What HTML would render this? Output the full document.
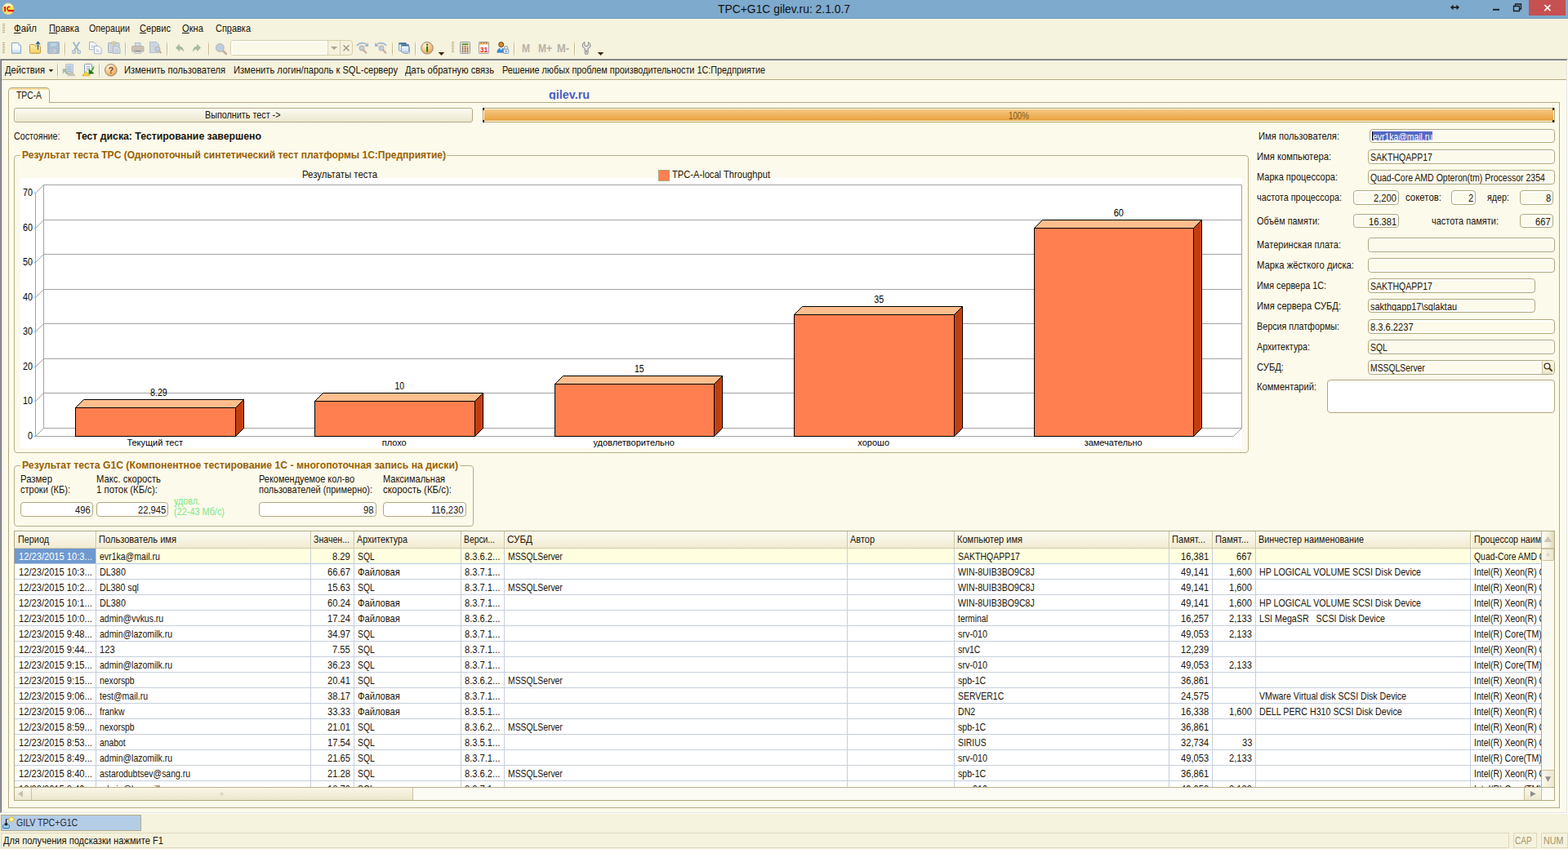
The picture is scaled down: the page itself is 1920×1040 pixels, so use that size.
<!DOCTYPE html>
<html lang="ru"><head><meta charset="utf-8"><title>TPC+G1C gilev.ru: 2.1.0.7</title>
<style>
html,body{margin:0;padding:0}
body{width:1920px;height:1040px;position:relative;overflow:hidden;background:#f5f2dd;font-family:"Liberation Sans",sans-serif;font-size:13px;color:#000}
div,span.t,svg{position:absolute;box-sizing:border-box}
span.t{white-space:pre;line-height:16px;font-size:13px;transform-origin:0 50%;color:#1c1408}
span.b{font-weight:bold}
span.g{color:#9a5f00;font-weight:bold}
span.w{color:#fff}
span.ch{font-size:12px}
.inp{border:1px solid #b0a87e;border-radius:4px;background:#fcfaeb;box-shadow:inset 0 0 0 2px #fff}
.btn{border:1px solid #b2aa80;border-radius:3px;background:linear-gradient(#fff 0,#fff 1px,#f9f7ea 3px,#f3f0de 55%,#ebe7d0 100%);box-shadow:inset 1px 0 0 #fff}
.grp{border:1px solid #b7af88;border-radius:4px}
.sep{width:2px;height:20px;background:linear-gradient(transparent,#c4b88c 25%,#c4b88c 75%,transparent) 0 0/1px 100% no-repeat,linear-gradient(transparent,#fffef8 25%,#fffef8 75%,transparent) 1px 0/1px 100% no-repeat}
.hd{background:linear-gradient(#fffffa 0,#fbfaf0 1px,#f6f3e2 50%,#f1ebd0 100%);border-bottom:1px solid #cfc8ac}
.vl{width:1px;background:#c6cfdb}
.hl{height:1px;background:#c6cfdb}

</style></head>
<body>
<div style="left:0px;top:0px;width:1920px;height:23px;background:#7eaace;border-bottom:1px solid #6f9bc0"></div>
<span class="t" style="left:879.00px;top:2.00px;transform:scaleX(0.9246);font-size:15px;line-height:18px;color:#111">TPC+G1C gilev.ru: 2.1.0.7</span>
<div style="left:1872px;top:0px;width:45px;height:19px;background:#c75050"></div>
<svg style="left:1872px;top:0" width="45" height="19"><path d="M19.300 6l7.200 7.200M26.500 6l-7.200 7.200" stroke="#fff" stroke-width="1.700" fill="none"/></svg>
<svg style="left:1770px;top:0" width="100" height="22" fill="none" stroke="#1b1b1b"><path d="M7.500 9h8" stroke-width="1.600"/><path d="M9.500 5.800L6 9l3.500 3.200zM13.500 5.800L17 9l-3.500 3.200z" fill="#1b1b1b" stroke="none"/><path d="M58 11.800h8" stroke-width="1.900"/><path d="M83.5 7.5h7v6h-7z" stroke-width="1.3"/><path d="M85.5 7.5v-2.5h7v6h-2" stroke-width="1.3"/></svg>
<svg style="left:0;top:0" width="22" height="22"><defs><linearGradient id="ig" x1="0" y1="0" x2="0" y2="1"><stop offset="0" stop-color="#fffdf0"/><stop offset=".22" stop-color="#fff6b8"/><stop offset=".5" stop-color="#f7de3e"/><stop offset=".72" stop-color="#f3d860"/><stop offset="1" stop-color="#fde6b4"/></linearGradient></defs><circle cx="10" cy="10.900" r="7.100" fill="url(#ig)" stroke="#d9b64a" stroke-width=".5"/><path d="M4.300 9.300l1.700-1.300h1v6.200h-1.700v-4.500z" fill="#e80c0c"/><circle cx="11" cy="10.600" r="2.100" fill="none" stroke="#e8200c" stroke-width="1.500" stroke-dasharray="9 4.200" transform="rotate(40 11 10.600)"/><rect x="9.800" y="12.200" width="7.300" height="2" fill="#e80000"/></svg>
<div style="left:0px;top:23px;width:1920px;height:50px;background:#f5f2dd"></div>
<div style="left:3px;top:29px;width:3px;height:12px;background:repeating-linear-gradient(#b9b08a 0 1px,transparent 1px 2px)"></div>
<span class="t" style="left:17.00px;top:27.00px;transform:scaleX(0.8759);"><u>Ф</u>айл</span>
<span class="t" style="left:60.00px;top:27.00px;transform:scaleX(0.8424);"><u>П</u>равка</span>
<span class="t" style="left:109.00px;top:27.00px;transform:scaleX(0.8222);">Операции</span>
<span class="t" style="left:171.00px;top:27.00px;transform:scaleX(0.8533);"><u>С</u>ервис</span>
<span class="t" style="left:223.00px;top:27.00px;transform:scaleX(0.8599);"><u>О</u>кна</span>
<span class="t" style="left:264.00px;top:27.00px;transform:scaleX(0.8429);">Сп<u>р</u>авка</span>
<div style="left:3px;top:52px;width:3px;height:13px;background:repeating-linear-gradient(#b9b08a 0 1px,transparent 1px 2px)"></div>
<div class="sep" style="left:79px;top:50px;width:2px;height:20px;"></div>
<div class="sep" style="left:153px;top:50px;width:2px;height:20px;"></div>
<div class="sep" style="left:204px;top:50px;width:2px;height:20px;"></div>
<div class="sep" style="left:255px;top:50px;width:2px;height:20px;"></div>
<div class="sep" style="left:480px;top:50px;width:2px;height:20px;"></div>
<div class="sep" style="left:508px;top:50px;width:2px;height:20px;"></div>
<div class="sep" style="left:629px;top:50px;width:2px;height:20px;"></div>
<div class="sep" style="left:703px;top:50px;width:2px;height:20px;"></div>
<div style="left:553px;top:51px;width:3px;height:13px;background:repeating-linear-gradient(#b9b08a 0 1px,transparent 1px 2px)"></div>
<div style="left:282px;top:49px;width:150px;height:19px;border:1px solid #d6cfac;border-radius:4px;background:#f5f2dd"></div>
<div style="left:283px;top:50px;width:119px;height:17px;background:#fbf9e8;border:2px solid #fff;border-radius:3px 0 0 3px"></div>
<div style="left:401px;top:50px;width:1px;height:17px;background:#d9d3b4"></div>
<div style="left:416px;top:50px;width:1px;height:17px;background:#d9d3b4"></div>
<svg style="left:402px;top:51px" width="29" height="15"><path d="M3 6h8.200l-4.100 4.200z" fill="#aba691"/><path d="M18.500 4.200l7 7M25.500 4.200l-7 7" stroke="#9d998b" stroke-width="1.500"/></svg>
<span class="t b" style="left:638.50px;top:51.00px;transform:scaleX(0.8568);color:#b9b1a8;font-size:14px">M</span>
<span class="t b" style="left:659.00px;top:51.00px;transform:scaleX(0.8567);color:#b9b1a8;font-size:14px">M+</span>
<span class="t b" style="left:682.00px;top:51.00px;transform:scaleX(0.9187);color:#b9b1a8;font-size:14px">M-</span>
<div style="left:0px;top:72px;width:1920px;height:923px;background:#fcfaeb;border-top:1px solid #a0a0a0;border-left:1px solid #a0a0a0;border-right:1px solid #fff"></div>
<div style="left:1px;top:73px;width:1918px;height:922px;border-top:1px solid #696969;border-left:1px solid #696969;border-right:1px solid #e3e3e3"></div>
<div style="left:1px;top:995px;width:1918px;height:1px;background:#e3e3e3"></div>
<div style="left:0px;top:996px;width:1920px;height:1px;background:#fff"></div>
<div style="left:0px;top:995px;width:1px;height:1px;background:#a0a0a0"></div>
<div style="left:1919px;top:995px;width:1px;height:1px;background:#fff"></div>
<div style="left:2px;top:74px;width:1916px;height:24px;background:#f5f2dd;border-bottom:1px solid #b3ab82;border-top:1px solid #fffdf0;border-left:1px solid #fffdf0"></div>
<span class="t" style="left:6.00px;top:78.00px;transform:scaleX(0.8601);">Действия</span>
<svg style="left:59px;top:84px" width="8" height="6"><path d="M0.600 .900h5.800l-2.900 3.300z" fill="#3a2a10"/></svg>
<div class="sep" style="left:70px;top:76px;width:2px;height:20px;"></div>
<div class="sep" style="left:121px;top:76px;width:2px;height:20px;"></div>
<span class="t" style="left:152.00px;top:78.00px;transform:scaleX(0.8577);">Изменить пользователя</span>
<span class="t" style="left:286.00px;top:78.00px;transform:scaleX(0.8567);">Изменить логин/пароль к SQL-серверу</span>
<span class="t" style="left:496.00px;top:78.00px;transform:scaleX(0.8585);">Дать обратную связь</span>
<span class="t" style="left:615.00px;top:78.00px;transform:scaleX(0.8330);">Решение любых проблем производительности 1С:Предприятие</span>
<div style="left:10px;top:125px;width:1900px;height:865px;border:1px solid #b3ab82"></div>
<div style="left:10px;top:107px;width:51px;height:19px;border:1px solid #b3ab82;border-bottom:none;border-radius:5px 5px 0 0;background:linear-gradient(#fbdc9e 0,#fbdc9e 2px,#fcfaeb 2px)"></div>
<span class="t" style="left:20.00px;top:109.00px;transform:scaleX(0.7949);">TPC-A</span>
<span class="t b" style="left:672.00px;top:108.00px;transform:scaleX(1.0253);color:#4a5ec6;font-size:14px;clip-path:inset(0 0 2px 0)">gilev.ru</span>
<div class="btn" style="left:17px;top:132px;width:562px;height:18px;"></div>
<span class="t" style="left:251.25px;top:133.00px;transform:scaleX(0.8304);">Выполнить тест -&gt;</span>
<div style="left:591px;top:132px;width:1313px;height:18px;border:1px solid #b3a56e;background:#fcfaeb"></div>
<div style="left:593px;top:134px;width:1309px;height:14px;background:linear-gradient(#f7c782,#f0b662 45%,#e9a545 90%,#eeb460)"></div>
<span class="t" style="left:1234.50px;top:134.00px;transform:scaleX(0.7519);color:#7d5a1e">100%</span>
<div style="left:591px;top:132px;width:2px;height:3px;background:#222"></div>
<div style="left:591px;top:147px;width:2px;height:3px;background:#222"></div>
<div style="left:1901px;top:132px;width:2px;height:3px;background:#222"></div>
<div style="left:1901px;top:147px;width:2px;height:3px;background:#222"></div>
<span class="t" style="left:17.00px;top:159.00px;transform:scaleX(0.8250);">Состояние:</span>
<span class="t b" style="left:93.00px;top:159.00px;transform:scaleX(0.9433);">Тест диска: Тестирование завершено</span>
<span class="t" style="left:1541.00px;top:159.00px;transform:scaleX(0.8618);">Имя пользователя:</span>
<span class="t" style="left:1539.00px;top:184.00px;transform:scaleX(0.8640);">Имя компьютера:</span>
<span class="t" style="left:1539.00px;top:209.00px;transform:scaleX(0.8481);">Марка процессора:</span>
<span class="t" style="left:1539.00px;top:234.00px;transform:scaleX(0.8361);">частота процессора:</span>
<span class="t" style="left:1539.00px;top:263.00px;transform:scaleX(0.8360);">Объём памяти:</span>
<span class="t" style="left:1539.00px;top:292.00px;transform:scaleX(0.8498);">Материнская плата:</span>
<span class="t" style="left:1539.00px;top:317.00px;transform:scaleX(0.8676);">Марка жёсткого диска:</span>
<span class="t" style="left:1539.00px;top:342.00px;transform:scaleX(0.8318);">Имя сервера 1С:</span>
<span class="t" style="left:1539.00px;top:367.00px;transform:scaleX(0.8574);">Имя сервера СУБД:</span>
<span class="t" style="left:1539.00px;top:392.00px;transform:scaleX(0.8270);">Версия платформы:</span>
<span class="t" style="left:1539.00px;top:417.00px;transform:scaleX(0.8236);">Архитектура:</span>
<span class="t" style="left:1539.00px;top:442.00px;transform:scaleX(0.8645);">СУБД:</span>
<span class="t" style="left:1539.00px;top:466.00px;transform:scaleX(0.8538);">Комментарий:</span>
<span class="t" style="left:1721.00px;top:234.00px;transform:scaleX(0.8786);">сокетов:</span>
<span class="t" style="left:1821.00px;top:234.00px;transform:scaleX(0.8256);">ядер:</span>
<span class="t" style="left:1753.00px;top:263.00px;transform:scaleX(0.8455);">частота памяти:</span>
<div class="inp" style="left:1677px;top:158px;width:227px;height:17px;"></div>
<div style="left:1680px;top:161px;width:1px;height:11px;background:#000"></div>
<div style="left:1681px;top:161px;width:73px;height:11px;background:#5468c4;overflow:hidden">
<span class="t w" style="left:-0.50px;top:-1.00px;transform:scaleX(0.8001);">evr1ka@mail.ru</span>
</div>
<div class="inp" style="left:1675px;top:183px;width:229px;height:18px;"></div>
<span class="t" style="left:1678.30px;top:185.00px;transform:scaleX(0.8079);">SAKTHQAPP17</span>
<div class="inp" style="left:1675px;top:208px;width:229px;height:18px;"></div>
<span class="t" style="left:1678.30px;top:210.00px;transform:scaleX(0.8087);">Quad-Core AMD Opteron(tm) Processor 2354</span>
<div class="inp" style="left:1657px;top:233px;width:56px;height:18px;"></div>
<span class="t" style="left:1681.81px;top:235.00px;transform:scaleX(0.8570);">2,200</span>
<div class="inp" style="left:1777px;top:233px;width:30px;height:18px;"></div>
<span class="t" style="left:1797.50px;top:235.00px;transform:scaleX(0.8570);">2</span>
<div class="inp" style="left:1861px;top:233px;width:41px;height:18px;"></div>
<span class="t" style="left:1892.50px;top:235.00px;transform:scaleX(0.8570);">8</span>
<div class="inp" style="left:1657px;top:262px;width:56px;height:17px;"></div>
<span class="t" style="left:1675.62px;top:264.00px;transform:scaleX(0.8570);clip-path:inset(0 0 4px 0)">16,381</span>
<div class="inp" style="left:1861px;top:262px;width:41px;height:17px;"></div>
<span class="t" style="left:1880.10px;top:264.00px;transform:scaleX(0.8570);clip-path:inset(0 0 4px 0)">667</span>
<div class="inp" style="left:1675px;top:291px;width:229px;height:18px;"></div>
<div class="inp" style="left:1675px;top:316px;width:229px;height:18px;"></div>
<div class="inp" style="left:1675px;top:341px;width:205px;height:18px;"></div>
<span class="t" style="left:1678.30px;top:343.00px;transform:scaleX(0.8079);">SAKTHQAPP17</span>
<div class="inp" style="left:1675px;top:366px;width:205px;height:17px;overflow:hidden"></div>
<span class="t" style="left:1678.30px;top:368.00px;transform:scaleX(0.8380);clip-path:inset(0 0 3px 0)">sakthqapp17\sqlaktau</span>
<div class="inp" style="left:1675px;top:391px;width:229px;height:18px;"></div>
<span class="t" style="left:1678.30px;top:393.00px;transform:scaleX(0.8570);">8.3.6.2237</span>
<div class="inp" style="left:1675px;top:416px;width:229px;height:18px;"></div>
<span class="t" style="left:1678.30px;top:418.00px;transform:scaleX(0.7970);">SQL</span>
<div class="inp" style="left:1675px;top:441px;width:229px;height:18px;"></div>
<span class="t" style="left:1678.30px;top:443.00px;transform:scaleX(0.7970);">MSSQLServer</span>
<div style="left:1888px;top:442px;width:15px;height:16px;border-left:1px solid #c9c19c;background:linear-gradient(#fbf9ec,#ebe6cc);border-radius:0 3px 3px 0"></div>
<svg style="left:1889px;top:443px" width="14" height="14"><circle cx="5.5" cy="5.5" r="3.4" fill="#fff" stroke="#4a3c12" stroke-width="1.4"/><path d="M8 8l3.6 3.6" stroke="#4a3c12" stroke-width="2"/></svg>
<div class="inp" style="left:1625px;top:465px;width:279px;height:41px;background:#fff"></div>
<div class="grp" style="left:17px;top:190px;width:1512px;height:365px;"></div>
<div style="left:25px;top:181px;width:522px;height:16px;background:#fcfaeb"></div>
<span class="t g" style="left:27.00px;top:182.00px;transform:scaleX(0.9237);">Результат теста TPC (Однопоточный синтетический тест платформы 1С:Предприятие)</span>
<svg style="left:25px;top:218px" width="1496" height="331" viewBox="25 218 1496 331" font-family="Liberation Sans, sans-serif" font-size="13"><defs><linearGradient id="gside" x1="0" y1="0" x2="1" y2="0"><stop offset="0" stop-color="#c84414"/><stop offset=".3" stop-color="#c03e12"/><stop offset=".7" stop-color="#c23e12"/><stop offset="1" stop-color="#d84c14"/></linearGradient></defs><rect x="25" y="218" width="1496" height="331" fill="#fff"/><g fill="none" stroke="#a3a3a3" stroke-width="1"><path d="M53.5 226.5H1520.5V524.5H53.5z"/><path d="M43.5 236.5L53.5 226.5V524.5L43.5 534.5z"/><path d="M43.5 534.5H1510.5L1520.5 524.5"/><path d="M43.5 491.5L53.5 481.5H1520.5"/><path d="M43.5 449.5L53.5 439.5H1520.5"/><path d="M43.5 406.5L53.5 396.5H1520.5"/><path d="M43.5 364.5L53.5 354.5H1520.5"/><path d="M43.5 321.5L53.5 311.5H1520.5"/><path d="M43.5 279.5L53.5 269.5H1520.5"/><path d="M42 534.5H43.5"/><path d="M42 491.5H43.5"/><path d="M42 449.5H43.5"/><path d="M42 406.5H43.5"/><path d="M42 364.5H43.5"/><path d="M42 321.5H43.5"/><path d="M42 279.5H43.5"/><path d="M42 236.5H43.5"/></g><text x="40" y="538" text-anchor="end" textLength="6" lengthAdjust="spacingAndGlyphs">0</text><text x="40" y="495" text-anchor="end" textLength="12" lengthAdjust="spacingAndGlyphs">10</text><text x="40" y="453" text-anchor="end" textLength="12" lengthAdjust="spacingAndGlyphs">20</text><text x="40" y="410" text-anchor="end" textLength="12" lengthAdjust="spacingAndGlyphs">30</text><text x="40" y="368" text-anchor="end" textLength="12" lengthAdjust="spacingAndGlyphs">40</text><text x="40" y="325" text-anchor="end" textLength="12" lengthAdjust="spacingAndGlyphs">50</text><text x="40" y="283" text-anchor="end" textLength="12" lengthAdjust="spacingAndGlyphs">60</text><text x="40" y="240" text-anchor="end" textLength="12" lengthAdjust="spacingAndGlyphs">70</text><path d="M92.5 499.5L102.5 489.5H298.5L288.5 499.5z" fill="#ffbe8e" stroke="#000"/><path d="M288.5 499.5L298.5 489.5V524.5L288.5 534.5z" fill="url(#gside)" stroke="#000"/><rect x="92.5" y="499.5" width="196" height="35.0" fill="#ff7f50" stroke="#000"/><text x="194.4" y="485.0" text-anchor="middle" textLength="20.7" lengthAdjust="spacingAndGlyphs">8.29</text><text x="189.7" y="546" text-anchor="middle" font-size="11">Текущий тест</text><path d="M385.5 491.5L395.5 481.5H591.5L581.5 491.5z" fill="#ffbe8e" stroke="#000"/><path d="M581.5 491.5L591.5 481.5V524.5L581.5 534.5z" fill="url(#gside)" stroke="#000"/><rect x="385.5" y="491.5" width="196" height="43.0" fill="#ff7f50" stroke="#000"/><text x="489.3" y="477.0" text-anchor="middle" textLength="11.5" lengthAdjust="spacingAndGlyphs">10</text><text x="482.7" y="546" text-anchor="middle" font-size="11">плохо</text><path d="M679.5 470.5L689.5 460.5H884.5L874.5 470.5z" fill="#ffbe8e" stroke="#000"/><path d="M874.5 470.5L884.5 460.5V524.5L874.5 534.5z" fill="url(#gside)" stroke="#000"/><rect x="679.5" y="470.5" width="195" height="64.0" fill="#ff7f50" stroke="#000"/><text x="782.8" y="456.0" text-anchor="middle" textLength="11.5" lengthAdjust="spacingAndGlyphs">15</text><text x="776.2" y="546" text-anchor="middle" font-size="11">удовлетворительно</text><path d="M972.5 385.5L982.5 375.5H1178.5L1168.5 385.5z" fill="#ffbe8e" stroke="#000"/><path d="M1168.5 385.5L1178.5 375.5V524.5L1168.5 534.5z" fill="url(#gside)" stroke="#000"/><rect x="972.5" y="385.5" width="196" height="149.0" fill="#ff7f50" stroke="#000"/><text x="1076.3" y="371.0" text-anchor="middle" textLength="12" lengthAdjust="spacingAndGlyphs">35</text><text x="1069.7" y="546" text-anchor="middle" font-size="11">хорошо</text><path d="M1266.5 279.5L1276.5 269.5H1471.5L1461.5 279.5z" fill="#ffbe8e" stroke="#000"/><path d="M1461.5 279.5L1471.5 269.5V524.5L1461.5 534.5z" fill="url(#gside)" stroke="#000"/><rect x="1266.5" y="279.5" width="195" height="255.0" fill="#ff7f50" stroke="#000"/><text x="1369.8" y="265.0" text-anchor="middle" textLength="12.3" lengthAdjust="spacingAndGlyphs">60</text><text x="1363.2" y="546" text-anchor="middle" font-size="11">замечательно</text></svg>
<span class="t" style="left:370.00px;top:206.00px;transform:scaleX(0.8791);">Результаты теста</span>
<div style="left:806px;top:208px;width:14px;height:14px;background:#ff7f50;border:1px solid #b0a67c"></div>
<span class="t" style="left:823.00px;top:206.00px;transform:scaleX(0.8575);">TPC-A-local Throughput</span>
<div class="grp" style="left:17px;top:570px;width:563px;height:75px;"></div>
<div style="left:25px;top:561px;width:538px;height:16px;background:#fcfaeb"></div>
<span class="t g" style="left:27.00px;top:562.00px;transform:scaleX(0.9389);">Результат теста G1C (Компонентное тестирование 1С - многопоточная запись на диски)</span>
<span class="t" style="left:25.00px;top:579.00px;transform:scaleX(0.8727);">Размер</span>
<span class="t" style="left:25.00px;top:592.00px;transform:scaleX(0.8489);">строки (КБ):</span>
<span class="t" style="left:118.00px;top:579.00px;transform:scaleX(0.8680);">Макс. скорость</span>
<span class="t" style="left:118.00px;top:592.00px;transform:scaleX(0.8756);">1 поток (КБ/с):</span>
<span class="t" style="left:317.00px;top:579.00px;transform:scaleX(0.8441);">Рекомендуемое кол-во</span>
<span class="t" style="left:317.00px;top:592.00px;transform:scaleX(0.8424);">пользователей (примерно):</span>
<span class="t" style="left:469.00px;top:579.00px;transform:scaleX(0.8465);">Максимальная</span>
<span class="t" style="left:469.00px;top:592.00px;transform:scaleX(0.8809);">скорость (КБ/с):</span>
<div class="inp" style="left:25px;top:615px;width:89px;height:18px;background:#fff"></div>
<span class="t" style="left:92.10px;top:617.00px;transform:scaleX(0.8570);">496</span>
<div class="inp" style="left:118px;top:615px;width:88px;height:18px;background:#fff"></div>
<span class="t" style="left:168.62px;top:617.00px;transform:scaleX(0.8570);">22,945</span>
<div class="inp" style="left:317px;top:615px;width:144px;height:18px;background:#fff"></div>
<span class="t" style="left:445.30px;top:617.00px;transform:scaleX(0.8570);">98</span>
<div class="inp" style="left:469px;top:615px;width:102px;height:18px;background:#fff"></div>
<span class="t" style="left:528.25px;top:617.00px;transform:scaleX(0.8570);">116,230</span>
<span class="t" style="left:213.00px;top:606.00px;transform:scaleX(0.8959);color:#80e684;font-size:12px">удовл.</span>
<span class="t" style="left:213.00px;top:619.00px;transform:scaleX(0.9086);color:#80e684;font-size:12px">(22-43 Мб/с)</span>
<div style="left:17px;top:650px;width:1887px;height:331px;border:1px solid #b2aa80;background:#fff"></div>
<div class="hd" style="left:18px;top:651px;width:1870px;height:21px;border-right:none"></div>
<div style="left:117px;top:651px;width:1px;height:20px;background:#c9c19c"></div>
<div style="left:118px;top:651px;width:1px;height:20px;background:#fffdf2"></div>
<div style="left:380px;top:651px;width:1px;height:20px;background:#c9c19c"></div>
<div style="left:381px;top:651px;width:1px;height:20px;background:#fffdf2"></div>
<div style="left:433px;top:651px;width:1px;height:20px;background:#c9c19c"></div>
<div style="left:434px;top:651px;width:1px;height:20px;background:#fffdf2"></div>
<div style="left:564px;top:651px;width:1px;height:20px;background:#c9c19c"></div>
<div style="left:565px;top:651px;width:1px;height:20px;background:#fffdf2"></div>
<div style="left:617px;top:651px;width:1px;height:20px;background:#c9c19c"></div>
<div style="left:618px;top:651px;width:1px;height:20px;background:#fffdf2"></div>
<div style="left:1037px;top:651px;width:1px;height:20px;background:#c9c19c"></div>
<div style="left:1038px;top:651px;width:1px;height:20px;background:#fffdf2"></div>
<div style="left:1168px;top:651px;width:1px;height:20px;background:#c9c19c"></div>
<div style="left:1169px;top:651px;width:1px;height:20px;background:#fffdf2"></div>
<div style="left:1431px;top:651px;width:1px;height:20px;background:#c9c19c"></div>
<div style="left:1432px;top:651px;width:1px;height:20px;background:#fffdf2"></div>
<div style="left:1484px;top:651px;width:1px;height:20px;background:#c9c19c"></div>
<div style="left:1485px;top:651px;width:1px;height:20px;background:#fffdf2"></div>
<div style="left:1537px;top:651px;width:1px;height:20px;background:#c9c19c"></div>
<div style="left:1538px;top:651px;width:1px;height:20px;background:#fffdf2"></div>
<div style="left:1800px;top:651px;width:1px;height:20px;background:#c9c19c"></div>
<div style="left:1801px;top:651px;width:1px;height:20px;background:#fffdf2"></div>
<div style="left:1801px;top:651px;width:86px;height:20px;overflow:hidden">
<span class="t" style="left:4.00px;top:2.00px;transform:scaleX(0.8192);">Процессор наименование</span>
</div>
<span class="t" style="left:22.00px;top:653.00px;transform:scaleX(0.8332);">Период</span>
<span class="t" style="left:121.00px;top:653.00px;transform:scaleX(0.8542);">Пользователь имя</span>
<span class="t" style="left:384.00px;top:653.00px;transform:scaleX(0.8148);">Значен...</span>
<span class="t" style="left:437.00px;top:653.00px;transform:scaleX(0.8232);">Архитектура</span>
<span class="t" style="left:568.00px;top:653.00px;transform:scaleX(0.7961);">Верси...</span>
<span class="t" style="left:621.00px;top:653.00px;transform:scaleX(0.8969);">СУБД</span>
<span class="t" style="left:1041.00px;top:653.00px;transform:scaleX(0.8436);">Автор</span>
<span class="t" style="left:1172.00px;top:653.00px;transform:scaleX(0.8498);">Компьютер имя</span>
<span class="t" style="left:1435.00px;top:653.00px;transform:scaleX(0.8558);">Памят...</span>
<span class="t" style="left:1488.00px;top:653.00px;transform:scaleX(0.8558);">Памят...</span>
<span class="t" style="left:1541.00px;top:653.00px;transform:scaleX(0.8301);">Винчестер наименование</span>
<div style="left:18px;top:672px;width:1870px;height:292px;overflow:hidden">
<div style="left:0px;top:0px;width:1870px;height:18px;background:#ffffe0"></div>
<div style="left:0px;top:0px;width:99px;height:18px;background:#6f99d0"></div>
<div class="hl" style="left:0;top:18px;width:1870px;background:#b4c9e6"></div>
<div class="hl" style="left:0;top:37px;width:1870px"></div>
<div class="hl" style="left:0;top:56px;width:1870px"></div>
<div class="hl" style="left:0;top:75px;width:1870px"></div>
<div class="hl" style="left:0;top:94px;width:1870px"></div>
<div class="hl" style="left:0;top:113px;width:1870px"></div>
<div class="hl" style="left:0;top:132px;width:1870px"></div>
<div class="hl" style="left:0;top:151px;width:1870px"></div>
<div class="hl" style="left:0;top:170px;width:1870px"></div>
<div class="hl" style="left:0;top:189px;width:1870px"></div>
<div class="hl" style="left:0;top:208px;width:1870px"></div>
<div class="hl" style="left:0;top:227px;width:1870px"></div>
<div class="hl" style="left:0;top:246px;width:1870px"></div>
<div class="hl" style="left:0;top:265px;width:1870px"></div>
<div class="hl" style="left:0;top:284px;width:1870px"></div>
<div class="hl" style="left:0;top:303px;width:1870px"></div>
<div class="vl" style="left:99px;top:0;height:300px"></div>
<div class="vl" style="left:362px;top:0;height:300px"></div>
<div class="vl" style="left:415px;top:0;height:300px"></div>
<div class="vl" style="left:546px;top:0;height:300px"></div>
<div class="vl" style="left:599px;top:0;height:300px"></div>
<div class="vl" style="left:1019px;top:0;height:300px"></div>
<div class="vl" style="left:1150px;top:0;height:300px"></div>
<div class="vl" style="left:1413px;top:0;height:300px"></div>
<div class="vl" style="left:1466px;top:0;height:300px"></div>
<div class="vl" style="left:1519px;top:0;height:300px"></div>
<div class="vl" style="left:1782px;top:0;height:300px"></div>
<span class="t w" style="left:4.50px;top:2.00px;transform:scaleX(0.8570);">12/23/2015 10:3...</span>
<span class="t" style="left:103.50px;top:2.00px;transform:scaleX(0.8099);">evr1ka@mail.ru</span>
<span class="t" style="left:389.31px;top:2.00px;transform:scaleX(0.8570);">8.29</span>
<span class="t" style="left:419.50px;top:2.00px;transform:scaleX(0.7970);">SQL</span>
<span class="t" style="left:550.50px;top:2.00px;transform:scaleX(0.8570);">8.3.6.2...</span>
<span class="t" style="left:603.50px;top:2.00px;transform:scaleX(0.7970);">MSSQLServer</span>
<span class="t" style="left:1154.50px;top:2.00px;transform:scaleX(0.8079);">SAKTHQAPP17</span>
<span class="t" style="left:1427.92px;top:2.00px;transform:scaleX(0.8570);">16,381</span>
<span class="t" style="left:1496.40px;top:2.00px;transform:scaleX(0.8570);">667</span>
<span class="t" style="left:4.50px;top:21.00px;transform:scaleX(0.8570);">12/23/2015 10:3...</span>
<span class="t" style="left:103.50px;top:21.00px;transform:scaleX(0.8330);">DL380</span>
<span class="t" style="left:383.11px;top:21.00px;transform:scaleX(0.8570);">66.67</span>
<span class="t" style="left:419.50px;top:21.00px;transform:scaleX(0.8570);">Файловая</span>
<span class="t" style="left:550.50px;top:21.00px;transform:scaleX(0.8570);">8.3.7.1...</span>
<span class="t" style="left:1154.50px;top:21.00px;transform:scaleX(0.8170);">WIN-8UIB3BO9C8J</span>
<span class="t" style="left:1427.92px;top:21.00px;transform:scaleX(0.8570);">49,141</span>
<span class="t" style="left:1487.11px;top:21.00px;transform:scaleX(0.8570);">1,600</span>
<span class="t" style="left:1523.50px;top:21.00px;transform:scaleX(0.8181);">HP LOGICAL VOLUME SCSI Disk Device</span>
<span class="t" style="left:4.50px;top:40.00px;transform:scaleX(0.8570);">12/23/2015 10:2...</span>
<span class="t" style="left:103.50px;top:40.00px;transform:scaleX(0.8195);">DL380 sql</span>
<span class="t" style="left:383.11px;top:40.00px;transform:scaleX(0.8570);">15.63</span>
<span class="t" style="left:419.50px;top:40.00px;transform:scaleX(0.7970);">SQL</span>
<span class="t" style="left:550.50px;top:40.00px;transform:scaleX(0.8570);">8.3.7.1...</span>
<span class="t" style="left:603.50px;top:40.00px;transform:scaleX(0.7970);">MSSQLServer</span>
<span class="t" style="left:1154.50px;top:40.00px;transform:scaleX(0.8170);">WIN-8UIB3BO9C8J</span>
<span class="t" style="left:1427.92px;top:40.00px;transform:scaleX(0.8570);">49,141</span>
<span class="t" style="left:1487.11px;top:40.00px;transform:scaleX(0.8570);">1,600</span>
<span class="t" style="left:4.50px;top:59.00px;transform:scaleX(0.8570);">12/23/2015 10:1...</span>
<span class="t" style="left:103.50px;top:59.00px;transform:scaleX(0.8330);">DL380</span>
<span class="t" style="left:383.11px;top:59.00px;transform:scaleX(0.8570);">60.24</span>
<span class="t" style="left:419.50px;top:59.00px;transform:scaleX(0.8570);">Файловая</span>
<span class="t" style="left:550.50px;top:59.00px;transform:scaleX(0.8570);">8.3.7.1...</span>
<span class="t" style="left:1154.50px;top:59.00px;transform:scaleX(0.8170);">WIN-8UIB3BO9C8J</span>
<span class="t" style="left:1427.92px;top:59.00px;transform:scaleX(0.8570);">49,141</span>
<span class="t" style="left:1487.11px;top:59.00px;transform:scaleX(0.8570);">1,600</span>
<span class="t" style="left:1523.50px;top:59.00px;transform:scaleX(0.8181);">HP LOGICAL VOLUME SCSI Disk Device</span>
<span class="t" style="left:4.50px;top:78.00px;transform:scaleX(0.8570);">12/23/2015 10:0...</span>
<span class="t" style="left:103.50px;top:78.00px;transform:scaleX(0.8056);">admin@vvkus.ru</span>
<span class="t" style="left:383.11px;top:78.00px;transform:scaleX(0.8570);">17.24</span>
<span class="t" style="left:419.50px;top:78.00px;transform:scaleX(0.8570);">Файловая</span>
<span class="t" style="left:550.50px;top:78.00px;transform:scaleX(0.8570);">8.3.6.2...</span>
<span class="t" style="left:1154.50px;top:78.00px;transform:scaleX(0.7970);">terminal</span>
<span class="t" style="left:1427.92px;top:78.00px;transform:scaleX(0.8570);">16,257</span>
<span class="t" style="left:1487.11px;top:78.00px;transform:scaleX(0.8570);">2,133</span>
<span class="t" style="left:1523.50px;top:78.00px;transform:scaleX(0.8230);">LSI MegaSR   SCSI Disk Device</span>
<span class="t" style="left:4.50px;top:97.00px;transform:scaleX(0.8570);">12/23/2015 9:48...</span>
<span class="t" style="left:103.50px;top:97.00px;transform:scaleX(0.8041);">admin@lazomilk.ru</span>
<span class="t" style="left:383.11px;top:97.00px;transform:scaleX(0.8570);">34.97</span>
<span class="t" style="left:419.50px;top:97.00px;transform:scaleX(0.7970);">SQL</span>
<span class="t" style="left:550.50px;top:97.00px;transform:scaleX(0.8570);">8.3.7.1...</span>
<span class="t" style="left:1154.50px;top:97.00px;transform:scaleX(0.8313);">srv-010</span>
<span class="t" style="left:1427.92px;top:97.00px;transform:scaleX(0.8570);">49,053</span>
<span class="t" style="left:1487.11px;top:97.00px;transform:scaleX(0.8570);">2,133</span>
<span class="t" style="left:4.50px;top:116.00px;transform:scaleX(0.8570);">12/23/2015 9:44...</span>
<span class="t" style="left:103.50px;top:116.00px;transform:scaleX(0.8570);">123</span>
<span class="t" style="left:389.31px;top:116.00px;transform:scaleX(0.8570);">7.55</span>
<span class="t" style="left:419.50px;top:116.00px;transform:scaleX(0.7970);">SQL</span>
<span class="t" style="left:550.50px;top:116.00px;transform:scaleX(0.8570);">8.3.7.1...</span>
<span class="t" style="left:1154.50px;top:116.00px;transform:scaleX(0.8090);">srv1C</span>
<span class="t" style="left:1427.92px;top:116.00px;transform:scaleX(0.8570);">12,239</span>
<span class="t" style="left:4.50px;top:135.00px;transform:scaleX(0.8570);">12/23/2015 9:15...</span>
<span class="t" style="left:103.50px;top:135.00px;transform:scaleX(0.8041);">admin@lazomilk.ru</span>
<span class="t" style="left:383.11px;top:135.00px;transform:scaleX(0.8570);">36.23</span>
<span class="t" style="left:419.50px;top:135.00px;transform:scaleX(0.7970);">SQL</span>
<span class="t" style="left:550.50px;top:135.00px;transform:scaleX(0.8570);">8.3.7.1...</span>
<span class="t" style="left:1154.50px;top:135.00px;transform:scaleX(0.8313);">srv-010</span>
<span class="t" style="left:1427.92px;top:135.00px;transform:scaleX(0.8570);">49,053</span>
<span class="t" style="left:1487.11px;top:135.00px;transform:scaleX(0.8570);">2,133</span>
<span class="t" style="left:4.50px;top:154.00px;transform:scaleX(0.8570);">12/23/2015 9:15...</span>
<span class="t" style="left:103.50px;top:154.00px;transform:scaleX(0.7970);">nexorspb</span>
<span class="t" style="left:383.11px;top:154.00px;transform:scaleX(0.8570);">20.41</span>
<span class="t" style="left:419.50px;top:154.00px;transform:scaleX(0.7970);">SQL</span>
<span class="t" style="left:550.50px;top:154.00px;transform:scaleX(0.8570);">8.3.6.2...</span>
<span class="t" style="left:603.50px;top:154.00px;transform:scaleX(0.7970);">MSSQLServer</span>
<span class="t" style="left:1154.50px;top:154.00px;transform:scaleX(0.8170);">spb-1C</span>
<span class="t" style="left:1427.92px;top:154.00px;transform:scaleX(0.8570);">36,861</span>
<span class="t" style="left:4.50px;top:173.00px;transform:scaleX(0.8570);">12/23/2015 9:06...</span>
<span class="t" style="left:103.50px;top:173.00px;transform:scaleX(0.8070);">test@mail.ru</span>
<span class="t" style="left:383.11px;top:173.00px;transform:scaleX(0.8570);">38.17</span>
<span class="t" style="left:419.50px;top:173.00px;transform:scaleX(0.8570);">Файловая</span>
<span class="t" style="left:550.50px;top:173.00px;transform:scaleX(0.8570);">8.3.7.1...</span>
<span class="t" style="left:1154.50px;top:173.00px;transform:scaleX(0.8045);">SERVER1C</span>
<span class="t" style="left:1427.92px;top:173.00px;transform:scaleX(0.8570);">24,575</span>
<span class="t" style="left:1523.50px;top:173.00px;transform:scaleX(0.8151);">VMware Virtual disk SCSI Disk Device</span>
<span class="t" style="left:4.50px;top:192.00px;transform:scaleX(0.8570);">12/23/2015 9:06...</span>
<span class="t" style="left:103.50px;top:192.00px;transform:scaleX(0.7970);">frankw</span>
<span class="t" style="left:383.11px;top:192.00px;transform:scaleX(0.8570);">33.33</span>
<span class="t" style="left:419.50px;top:192.00px;transform:scaleX(0.8570);">Файловая</span>
<span class="t" style="left:550.50px;top:192.00px;transform:scaleX(0.8570);">8.3.5.1...</span>
<span class="t" style="left:1154.50px;top:192.00px;transform:scaleX(0.8170);">DN2</span>
<span class="t" style="left:1427.92px;top:192.00px;transform:scaleX(0.8570);">16,338</span>
<span class="t" style="left:1487.11px;top:192.00px;transform:scaleX(0.8570);">1,600</span>
<span class="t" style="left:1523.50px;top:192.00px;transform:scaleX(0.8215);">DELL PERC H310 SCSI Disk Device</span>
<span class="t" style="left:4.50px;top:211.00px;transform:scaleX(0.8570);">12/23/2015 8:59...</span>
<span class="t" style="left:103.50px;top:211.00px;transform:scaleX(0.7970);">nexorspb</span>
<span class="t" style="left:383.11px;top:211.00px;transform:scaleX(0.8570);">21.01</span>
<span class="t" style="left:419.50px;top:211.00px;transform:scaleX(0.7970);">SQL</span>
<span class="t" style="left:550.50px;top:211.00px;transform:scaleX(0.8570);">8.3.6.2...</span>
<span class="t" style="left:603.50px;top:211.00px;transform:scaleX(0.7970);">MSSQLServer</span>
<span class="t" style="left:1154.50px;top:211.00px;transform:scaleX(0.8170);">spb-1C</span>
<span class="t" style="left:1427.92px;top:211.00px;transform:scaleX(0.8570);">36,861</span>
<span class="t" style="left:4.50px;top:230.00px;transform:scaleX(0.8570);">12/23/2015 8:53...</span>
<span class="t" style="left:103.50px;top:230.00px;transform:scaleX(0.7970);">anabot</span>
<span class="t" style="left:383.11px;top:230.00px;transform:scaleX(0.8570);">17.54</span>
<span class="t" style="left:419.50px;top:230.00px;transform:scaleX(0.7970);">SQL</span>
<span class="t" style="left:550.50px;top:230.00px;transform:scaleX(0.8570);">8.3.5.1...</span>
<span class="t" style="left:1154.50px;top:230.00px;transform:scaleX(0.7970);">SIRIUS</span>
<span class="t" style="left:1427.92px;top:230.00px;transform:scaleX(0.8570);">32,734</span>
<span class="t" style="left:1502.60px;top:230.00px;transform:scaleX(0.8570);">33</span>
<span class="t" style="left:4.50px;top:249.00px;transform:scaleX(0.8570);">12/23/2015 8:49...</span>
<span class="t" style="left:103.50px;top:249.00px;transform:scaleX(0.8041);">admin@lazomilk.ru</span>
<span class="t" style="left:383.11px;top:249.00px;transform:scaleX(0.8570);">21.65</span>
<span class="t" style="left:419.50px;top:249.00px;transform:scaleX(0.7970);">SQL</span>
<span class="t" style="left:550.50px;top:249.00px;transform:scaleX(0.8570);">8.3.7.1...</span>
<span class="t" style="left:1154.50px;top:249.00px;transform:scaleX(0.8313);">srv-010</span>
<span class="t" style="left:1427.92px;top:249.00px;transform:scaleX(0.8570);">49,053</span>
<span class="t" style="left:1487.11px;top:249.00px;transform:scaleX(0.8570);">2,133</span>
<span class="t" style="left:4.50px;top:268.00px;transform:scaleX(0.8570);">12/23/2015 8:40...</span>
<span class="t" style="left:103.50px;top:268.00px;transform:scaleX(0.8027);">astarodubtsev@sang.ru</span>
<span class="t" style="left:383.11px;top:268.00px;transform:scaleX(0.8570);">21.28</span>
<span class="t" style="left:419.50px;top:268.00px;transform:scaleX(0.7970);">SQL</span>
<span class="t" style="left:550.50px;top:268.00px;transform:scaleX(0.8570);">8.3.6.2...</span>
<span class="t" style="left:603.50px;top:268.00px;transform:scaleX(0.7970);">MSSQLServer</span>
<span class="t" style="left:1154.50px;top:268.00px;transform:scaleX(0.8170);">spb-1C</span>
<span class="t" style="left:1427.92px;top:268.00px;transform:scaleX(0.8570);">36,861</span>
<span class="t" style="left:4.50px;top:287.00px;transform:scaleX(0.8570);">12/23/2015 8:40...</span>
<span class="t" style="left:103.50px;top:287.00px;transform:scaleX(0.8041);">admin@lazomilk.ru</span>
<span class="t" style="left:383.11px;top:287.00px;transform:scaleX(0.8570);">18.73</span>
<span class="t" style="left:419.50px;top:287.00px;transform:scaleX(0.7970);">SQL</span>
<span class="t" style="left:550.50px;top:287.00px;transform:scaleX(0.8570);">8.3.7.1...</span>
<span class="t" style="left:1154.50px;top:287.00px;transform:scaleX(0.8313);">srv-010</span>
<span class="t" style="left:1427.92px;top:287.00px;transform:scaleX(0.8570);">49,053</span>
<span class="t" style="left:1487.11px;top:287.00px;transform:scaleX(0.8570);">2,133</span>
<div style="left:1783px;top:0;width:86px;height:300px;overflow:hidden">
<span class="t" style="left:4.00px;top:2.00px;transform:scaleX(0.8002);">Quad-Core AMD Opteron</span>
<span class="t" style="left:4.00px;top:21.00px;transform:scaleX(0.8103);">Intel(R) Xeon(R) CPU</span>
<span class="t" style="left:4.00px;top:40.00px;transform:scaleX(0.8103);">Intel(R) Xeon(R) CPU</span>
<span class="t" style="left:4.00px;top:59.00px;transform:scaleX(0.8103);">Intel(R) Xeon(R) CPU</span>
<span class="t" style="left:4.00px;top:78.00px;transform:scaleX(0.8103);">Intel(R) Xeon(R) CPU</span>
<span class="t" style="left:4.00px;top:97.00px;transform:scaleX(0.8137);">Intel(R) Core(TM) i7</span>
<span class="t" style="left:4.00px;top:116.00px;transform:scaleX(0.8103);">Intel(R) Xeon(R) CPU</span>
<span class="t" style="left:4.00px;top:135.00px;transform:scaleX(0.8137);">Intel(R) Core(TM) i7</span>
<span class="t" style="left:4.00px;top:154.00px;transform:scaleX(0.8103);">Intel(R) Xeon(R) CPU</span>
<span class="t" style="left:4.00px;top:173.00px;transform:scaleX(0.8103);">Intel(R) Xeon(R) CPU</span>
<span class="t" style="left:4.00px;top:192.00px;transform:scaleX(0.8103);">Intel(R) Xeon(R) CPU</span>
<span class="t" style="left:4.00px;top:211.00px;transform:scaleX(0.8103);">Intel(R) Xeon(R) CPU</span>
<span class="t" style="left:4.00px;top:230.00px;transform:scaleX(0.8103);">Intel(R) Xeon(R) CPU</span>
<span class="t" style="left:4.00px;top:249.00px;transform:scaleX(0.8137);">Intel(R) Core(TM) i7</span>
<span class="t" style="left:4.00px;top:268.00px;transform:scaleX(0.8103);">Intel(R) Xeon(R) CPU</span>
<span class="t" style="left:4.00px;top:287.00px;transform:scaleX(0.8137);">Intel(R) Core(TM) i7</span>
</div>
</div>
<div style="left:1887px;top:651px;width:16px;height:313px;background:#fbfaf2;border-left:1px solid #b9b08a"></div>
<div style="left:1888px;top:651px;width:15px;height:21px;background:linear-gradient(90deg,#fdfcf4,#f1edd9 60%,#ddd6b6);border-bottom:1px solid #c9c19c"></div>
<div style="left:1888px;top:672px;width:15px;height:15px;background:linear-gradient(90deg,#fbf9ec,#ece7cf);border:1px solid #c9c19c;border-left:none;border-radius:0 0 2px 2px"></div>
<div style="left:1888px;top:943px;width:15px;height:21px;background:linear-gradient(90deg,#fbf9ec,#ece7cf);border-top:1px solid #c9c19c"></div>
<svg style="left:1888px;top:651px" width="15" height="313"><path d="M2.500 13h10l-5-7z" fill="#c9c5b5"/><path d="M4 300.300h7l-3.500 6.500z" fill="#8e8e8e"/><circle cx="7.500" cy="28.500" r="1.500" fill="none" stroke="#cbc6ae"/></svg>
<div style="left:18px;top:964px;width:1885px;height:16px;background:#fbfaf3;border-top:1px solid #b9b08a"></div>
<div style="left:18px;top:965px;width:21px;height:15px;background:linear-gradient(#fbf9ec,#ece7cf);border-right:1px solid #c9c19c"></div>
<div style="left:39px;top:965px;width:467px;height:15px;background:linear-gradient(#f9f6e6,#ebe6cd);border-right:1px solid #c9c19c"></div>
<div style="left:1866px;top:965px;width:22px;height:15px;background:linear-gradient(#fbf9ec,#ece7cf);border-left:1px solid #c9c19c;border-right:1px solid #c9c19c"></div>
<svg style="left:18px;top:965px" width="1870" height="16"><path d="M10 3.5v8l-6-4z" fill="#c5c1b0"/><path d="M1856 4v7l6.700-3.500z" fill="#8e8e8e"/><circle cx="253.500" cy="7.500" r="1.5" fill="none" stroke="#cbc6ae"/></svg>
<div style="left:0px;top:997px;width:1920px;height:23px;background:#f5f2dd"></div>
<div style="left:1px;top:998px;width:172px;height:20px;background:#b4cde7;border:1px solid #b5ad86"></div>
<span class="t" style="left:19.80px;top:1000.00px;transform:scaleX(0.8142);color:#26283c">GILV TPC+G1C</span>
<svg style="left:2px;top:999px" width="17" height="18"><rect x="1.500" y="11.500" width="8" height="4" rx="1.200" fill="#9fd0f0" stroke="#2f6fa8"/><path d="M5.500 4.500v8" stroke="#111" stroke-width="1.100" fill="none"/><path d="M3 9.500h5l-2.500 3z" fill="#111"/><path d="M5.500 4.500h3" stroke="#111" stroke-width="1" stroke-dasharray="1 1" fill="none"/><path d="M12 .8l3.700 3.900-3.700 3.900-3.700-3.900z" fill="#ffe45a" stroke="#d9b21c" stroke-width=".8"/><path d="M12 2.800l1.800 1.900-1.800 1.900-1.800-1.900z" fill="#fffbd8"/></svg>
<div style="left:0px;top:1019px;width:1920px;height:21px;background:#f5f2dd"></div>
<div style="left:1px;top:1020px;width:1847px;height:19px;border:1px solid #ddd8be"></div>
<div style="left:1853px;top:1020px;width:29px;height:19px;border:1px solid #ddd8be"></div>
<div style="left:1887px;top:1020px;width:33px;height:19px;border:1px solid #ddd8be"></div>
<span class="t" style="left:4.00px;top:1022.00px;transform:scaleX(0.8560);">Для получения подсказки нажмите F1</span>
<span class="t" style="left:1855.30px;top:1022.00px;transform:scaleX(0.7705);color:#a3936a">CAP</span>
<span class="t" style="left:1890.00px;top:1022.00px;transform:scaleX(0.8241);color:#a3936a">NUM</span>
<svg style="left:0;top:46px" width="760" height="26" viewBox="0 46 760 26"><defs>
<linearGradient id="gdoc" x1="0" y1="0" x2="0" y2="1"><stop offset="0" stop-color="#ffffff"/><stop offset=".5" stop-color="#f3f8fc"/><stop offset="1" stop-color="#c3d9ec"/></linearGradient>
<linearGradient id="gfol" x1="0" y1="0" x2="0" y2="1"><stop offset="0" stop-color="#f9ecb0"/><stop offset="1" stop-color="#efd266"/></linearGradient>
<radialGradient id="gorb" cx=".38" cy=".3" r=".8"><stop offset="0" stop-color="#fff1dc"/><stop offset=".45" stop-color="#f8cd92"/><stop offset="1" stop-color="#e79a3c"/></radialGradient>
<linearGradient id="gwin" x1="0" y1="0" x2="0" y2="1"><stop offset="0" stop-color="#ffffff"/><stop offset="1" stop-color="#c9dcee"/></linearGradient>
</defs><path d="M14.5 52.500h8l3 3v9.800h-11z" fill="url(#gdoc)" stroke="#8ba5bc"/><path d="M22.500 52.500v3h3" fill="#dbe7f2" stroke="#9fb6ca" stroke-width=".8"/><path d="M36.500 55.500q0-1 1-1h4.500l1.500 1.800h5q1 0 1 1v7q0 1-1 1h-11q-1 0-1-1z" fill="url(#gfol)" stroke="#c59a3a"/><path d="M46.500 61V52" stroke="#2e5c7e" stroke-width="1.200" fill="none"/><path d="M44 54.300l2.500-3 2.500 3" stroke="#2e5c7e" stroke-width="1.300" fill="none"/><rect x="58.500" y="51.500" width="14" height="14" rx="1" fill="#aabdd1" stroke="#9db3c9"/><rect x="61.500" y="52.500" width="8" height="4.500" fill="#bfd3e0" stroke="#a9bfd2" stroke-width=".6"/><rect x="62" y="60" width="7" height="5" fill="#c9c9cf"/><rect x="63.300" y="61" width="1.500" height="3" fill="#9fb3c8"/><g fill="none" stroke="#a3b7cf" stroke-width="2.100"><path d="M89.700 51.500l6.300 10.300M97.300 51.500l-6.300 10.300"/><rect x="88.800" y="61.800" width="3.300" height="3.600" rx="1" stroke-width="1.300"/><rect x="95" y="61.800" width="3.300" height="3.600" rx="1" stroke-width="1.300"/></g><path d="M109.5 51.5h5.500l3 3v6.300h-8.500z" fill="#fbfcfe" stroke="#9fb2d0"/><path d="M111.5 56.0h3M111.5 58.0h4.500" stroke="#aab6c6" stroke-width=".9"/><path d="M115.5 56.5h5.500l3 3v6.300h-8.500z" fill="#fbfcfe" stroke="#9fb2d0"/><path d="M117.5 61.0h3M117.5 63.0h4.500" stroke="#aab6c6" stroke-width=".9"/><rect x="132.500" y="52.500" width="13.500" height="12" rx="1" fill="#d2d3d8" stroke="#9fb3cc"/><rect x="136.500" y="51.200" width="5.500" height="3" rx="1" fill="#d8d2b4" stroke="#c0b38c" stroke-width=".8"/><path d="M138.500 56.500h5.500l3 3v6h-8.500z" fill="#d5d9e0" stroke="#a5bbd3"/><path d="M140.500 61h4.500M140.500 63h4.500" stroke="#b3c3d6" stroke-width=".8"/><rect x="165.500" y="52.500" width="6.500" height="5" fill="#d9d9dc" stroke="#a9c0d6"/><rect x="161.500" y="56.500" width="14.500" height="7" rx="1.500" fill="#cfc0b5" stroke="#b5b0b0"/><rect x="165" y="61.500" width="7.500" height="4" fill="#e5e5e5" stroke="#b0b0b0" stroke-width=".8"/><rect x="165.500" y="62" width="6.500" height="1.500" fill="#8e8e8e"/><rect x="172.300" y="59.500" width="1.300" height="1" fill="#8fd08f"/><path d="M183.500 51.500h8l3 3v10h-11z" fill="#cfd5dd" stroke="#a9c0d8"/><circle cx="193" cy="60" r="2.800" fill="#bcd0e8" stroke="#c8b2a0" stroke-width="1.100"/><path d="M195 62.300l2.500 2.700" stroke="#c4ad9c" stroke-width="2"/><path d="M215 58.500l5-4.700v3q5 .2 5 7.200-1.300-3.700-5-3.500v2.700z" fill="#a5b9a3"/><path d="M246 58.500l-5-4.700v3q-5 .2-5 7.200 1.300-3.700 5-3.500v2.700z" fill="#a5b9a3"/><path d="M273 62.300l4 3.700" stroke="#c4b0a0" stroke-width="2.600" stroke-linecap="round"/><circle cx="269.300" cy="58.500" r="4.900" fill="#b9cde7" stroke="#c9b6a6" stroke-width="1.100"/><g transform="translate(443.5 0)"><g transform="scale(1 1)"><path d="M-6.800 55.800q6.500-6 13.300-.5" fill="none" stroke="#9fb6cf" stroke-width="1.600"/><path d="M7.500 52.300v4.700h-4.700z" fill="#9fb6cf"/></g><circle cx="-0.5" cy="59" r="2.900" fill="#bcd0e8" stroke="#c8b2a0" stroke-width="1.100"/><path d="M1.7999999999999998 61.500l3 3.200" stroke="#c4ad9c" stroke-width="2.200" stroke-linecap="round"/></g><g transform="translate(466.5 0)"><g transform="scale(-1 1)"><path d="M-6.800 55.800q6.500-6 13.300-.5" fill="none" stroke="#9fb6cf" stroke-width="1.600"/><path d="M7.500 52.300v4.700h-4.700z" fill="#9fb6cf"/></g><circle cx="0.5" cy="59" r="2.900" fill="#bcd0e8" stroke="#c8b2a0" stroke-width="1.100"/><path d="M2.8 61.500l3 3.200" stroke="#c4ad9c" stroke-width="2.200" stroke-linecap="round"/></g><rect x="488.500" y="52.500" width="9" height="10" rx="1" fill="url(#gwin)" stroke="#6f94b8" stroke-width=".8"/><rect x="488.500" y="52.500" width="9" height="2" fill="#3e6d96"/><rect x="493.500" y="57" width="8" height="8.500" rx="1" fill="#fff" stroke="#6f94b8" stroke-width=".8"/><rect x="491.500" y="54.500" width="9" height="9.500" rx="1" fill="url(#gwin)" stroke="#6f94b8" stroke-width=".8"/><rect x="491.500" y="54.500" width="9" height="2" fill="#3e6d96"/><circle cx="523" cy="58.800" r="7.300" fill="url(#gorb)" stroke="#8b817b" stroke-width=".9"/><rect x="522" y="56.800" width="2.100" height="6.800" fill="#2f7d12"/><rect x="522" y="53.800" width="2.100" height="2" fill="#2f7d12"/><path d="M536.700 64h7.600l-3.800 4z" fill="#3a2906"/><path d="M731.700 64h7.600l-3.800 4z" fill="#3a2906"/><rect x="563.500" y="51.500" width="12" height="14" rx="1" fill="#fde4c4" stroke="#8b9cb4"/><rect x="565.500" y="53.300" width="8" height="1.900" fill="#4a9a3a"/><rect x="565.7" y="56.6" width="1.700" height="1.100" fill="#3a3026"/><rect x="568.7" y="56.6" width="1.700" height="1.100" fill="#3a3026"/><rect x="571.7" y="56.6" width="1.700" height="1.100" fill="#e03020"/><rect x="565.7" y="58.7" width="1.700" height="1.100" fill="#3a3026"/><rect x="568.7" y="58.7" width="1.700" height="1.100" fill="#3a3026"/><rect x="571.7" y="58.7" width="1.700" height="1.100" fill="#3a3026"/><rect x="565.7" y="60.800000000000004" width="1.700" height="1.100" fill="#3a3026"/><rect x="568.7" y="60.800000000000004" width="1.700" height="1.100" fill="#3a3026"/><rect x="571.7" y="60.800000000000004" width="1.700" height="1.100" fill="#3a3026"/><rect x="565.7" y="62.900000000000006" width="1.700" height="1.100" fill="#3a3026"/><rect x="568.7" y="62.900000000000006" width="1.700" height="1.100" fill="#3a3026"/><rect x="571.7" y="62.900000000000006" width="1.700" height="1.100" fill="#3a3026"/><rect x="586.500" y="51.500" width="12" height="14" rx=".8" fill="#fffdf8" stroke="#9aa0aa"/><rect x="587" y="52" width="11" height="2.500" fill="#f3b768"/><rect x="588.500" y="52.300" width="1.200" height="1.200" fill="#7a4a18"/><rect x="591.800" y="52.300" width="1.200" height="1.200" fill="#7a4a18"/><rect x="595" y="52.300" width="1.200" height="1.200" fill="#7a4a18"/><rect x="587" y="63" width="11" height="2" fill="#fbe3c6"/><text x="592.500" y="63.600" font-family="Liberation Sans" font-weight="bold" font-size="9.500" fill="#e8251c" text-anchor="middle" textLength="9.500" lengthAdjust="spacingAndGlyphs">31</text><circle cx="613.700" cy="54.600" r="3" fill="#d6902c" stroke="#4a2e10" stroke-width=".9"/><path d="M608.800 64.300q0-5 5-5t5 5z" fill="#3d8fd6" stroke="#2d78ba" stroke-width=".6"/><path d="M612.300 59.300l1.400 2.200 1.400-2.200z" fill="#fff"/><path d="M617.700 60.500v-2q0-1.800 1.900-1.800t1.900 1.800v2" fill="none" stroke="#9db3cc" stroke-width="1.300"/><rect x="616.500" y="60.200" width="6.200" height="5.300" rx=".8" fill="#dfe8f2" stroke="#7f9abb"/><rect x="619" y="61.800" width="1.200" height="2.300" fill="#5c7898"/><path d="M715.800 51.500q-3 1.600-2.600 4.600.4 2.400 2.900 3.300v5q0 2.200 2 2.200t2-2.200v-5q2.500-.9 2.900-3.300.4-3-2.600-4.600v3.600q0 1.200-1.200 1.200h-2.200q-1.200 0-1.200-1.200z" fill="#e4e4e4" stroke="#858585" stroke-width="1"/><rect x="717.400" y="61.300" width="1.400" height="3.400" rx=".6" fill="#858585"/></svg>
<svg style="left:70px;top:74px" width="80" height="23" viewBox="70 74 80 23"><defs><radialGradient id="gorb2" cx=".38" cy=".3" r=".8"><stop offset="0" stop-color="#fff1dc"/><stop offset=".45" stop-color="#f8cd92"/><stop offset="1" stop-color="#e79a3c"/></radialGradient></defs><rect x="80.500" y="78.500" width="9" height="12" rx=".8" fill="#cbd8e6" stroke="#b3c5da"/><path d="M82.500 81.500h5M82.500 83.500h5M82.500 85.500h5M82.500 87.500h5" stroke="#a3b8d0" stroke-width="1"/><path d="M76.800 84.200h6.200l-2.100 2.100 3.300 3.600-1.500 1.500-3.500-3.400-2.400 2.400z" fill="#a7baa6"/><path d="M82.800 92.800l4.600-5.800 4.600 5.800z" fill="#c9c4b4" stroke="#bdb7a4" stroke-width=".6"/><rect x="103.500" y="78.500" width="9" height="12" rx=".8" fill="#fdfefe" stroke="#7d9dbd"/><path d="M105.500 81.500h5M105.500 83.500h5M105.500 85.500h3" stroke="#9fb0c6" stroke-width="1"/><path d="M112 87q2.300-2 2.800-5.700" fill="none" stroke="#4aa832" stroke-width="1.600"/><path d="M108.900 84.500v5.500h6.200z" fill="#237a14"/><path d="M108.900 84.500v5.500h6.200z" fill="none" stroke="#1c6a10" stroke-width=".5"/><path d="M100.600 92.800l4.800-5.600 4.800 5.600z" fill="#f3d648" stroke="#d3a41c" stroke-width=".7"/><circle cx="135.800" cy="85.800" r="7.300" fill="url(#gorb2)" stroke="#8b817b" stroke-width=".9"/><text x="135.900" y="90" font-family="Liberation Sans" font-weight="bold" font-size="11" fill="#7d4a26" text-anchor="middle">?</text></svg>
</body></html>
